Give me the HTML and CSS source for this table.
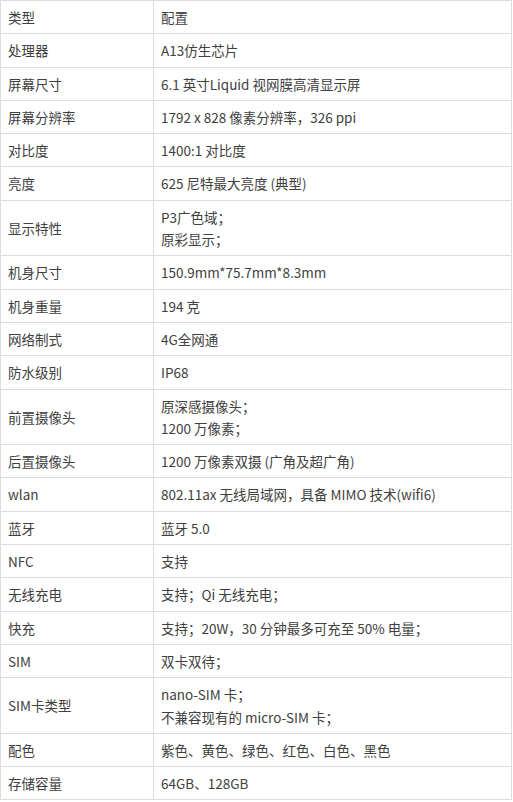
FILE: index.html
```html
<!DOCTYPE html>
<html lang="zh-CN">
<head>
<meta charset="utf-8">
<title>参数</title>
<link rel="stylesheet" href="styles.css">
</head>
<body>
<table class="spec">
  <tbody>
    <tr><td class="k">类型</td><td class="v">配置</td></tr>
    <tr><td class="k">处理器</td><td class="v">A13仿生芯片</td></tr>
    <tr><td class="k">屏幕尺寸</td><td class="v">6.1 英寸Liquid 视网膜高清显示屏</td></tr>
    <tr><td class="k">屏幕分辨率</td><td class="v">1792 x 828 像素分辨率，326 ppi</td></tr>
    <tr><td class="k">对比度</td><td class="v">1400:1 对比度</td></tr>
    <tr><td class="k">亮度</td><td class="v">625 尼特最大亮度 (典型)</td></tr>
    <tr><td class="k">显示特性</td><td class="v">P3广色域；<br>原彩显示；</td></tr>
    <tr><td class="k">机身尺寸</td><td class="v">150.9mm*75.7mm*8.3mm</td></tr>
    <tr><td class="k">机身重量</td><td class="v">194 克</td></tr>
    <tr><td class="k">网络制式</td><td class="v">4G全网通</td></tr>
    <tr><td class="k">防水级别</td><td class="v">IP68</td></tr>
    <tr><td class="k">前置摄像头</td><td class="v">原深感摄像头；<br>1200 万像素；</td></tr>
    <tr><td class="k">后置摄像头</td><td class="v">1200 万像素双摄 (广角及超广角)</td></tr>
    <tr><td class="k">wlan</td><td class="v">802.11ax 无线局域网，具备 MIMO 技术(wifi6)</td></tr>
    <tr><td class="k">蓝牙</td><td class="v">蓝牙 5.0</td></tr>
    <tr><td class="k">NFC</td><td class="v">支持</td></tr>
    <tr><td class="k">无线充电</td><td class="v">支持；Qi 无线充电；</td></tr>
    <tr><td class="k">快充</td><td class="v">支持；20W，30 分钟最多可充至 50% 电量；</td></tr>
    <tr><td class="k">SIM</td><td class="v">双卡双待；</td></tr>
    <tr><td class="k">SIM卡类型</td><td class="v">nano-SIM 卡；<br>不兼容现有的 micro-SIM 卡；</td></tr>
    <tr><td class="k">配色</td><td class="v">紫色、黄色、绿色、红色、白色、黑色</td></tr>
    <tr><td class="k">存储容量</td><td class="v">64GB、128GB</td></tr>
  </tbody>
</table>
</body>
</html>
```
FILE: styles.css
```css
html, body {
  margin: 0;
  padding: 0;
  background: #ffffff;
}
.spec {
  border-collapse: collapse;
  width: 512px;
  table-layout: fixed;
  font-family: "Noto Sans CJK SC", "Noto Sans", sans-serif;
  font-size: 13.5px;
  line-height: 22.3px;
  color: #404040;
}
.spec td {
  border: 1px solid #dcdcdc;
  padding: 5px 7px 5px 7px;
  vertical-align: middle;
  text-align: left;
}
.spec .k {
  width: 138px;
}
```
